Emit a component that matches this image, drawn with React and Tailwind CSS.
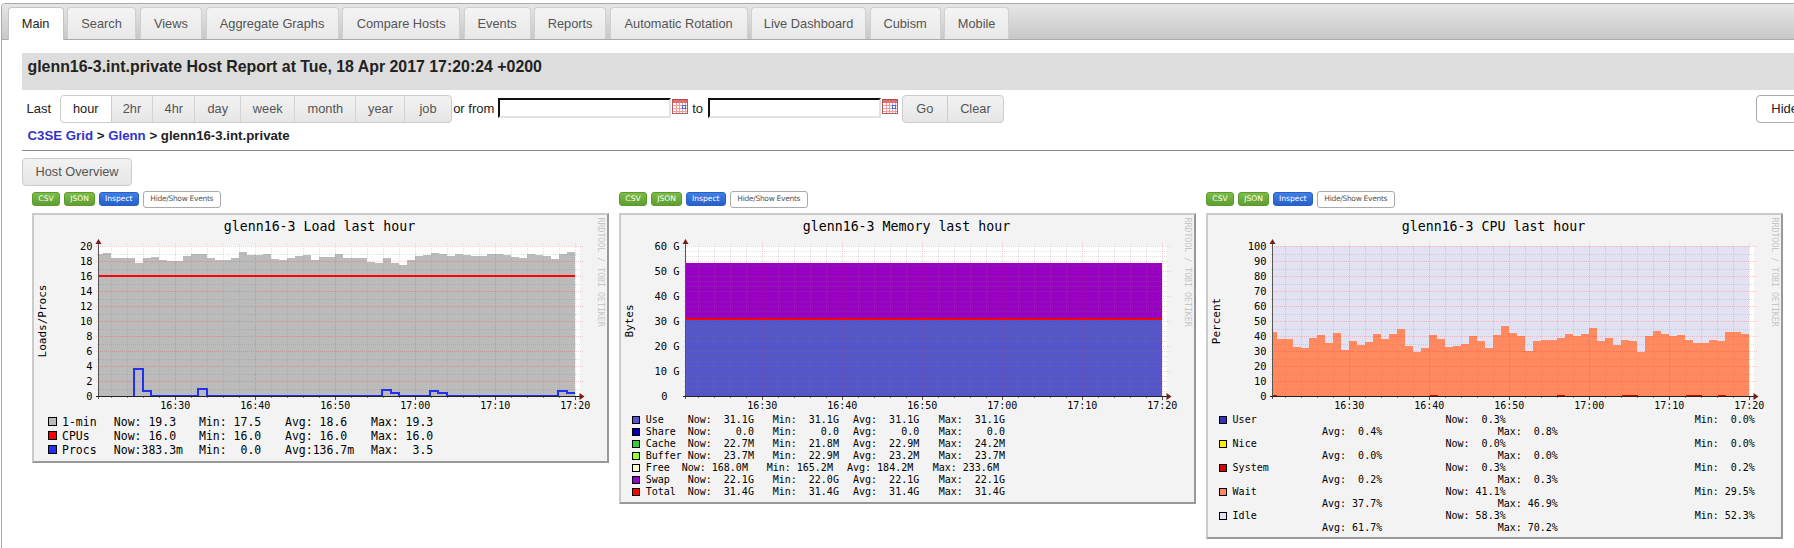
import React from "react";

const X0 = 64.5;
const BOTTOM = 181;
const TOP = 31;
const W = 476.5;

const TABS = [
  ["Main", "w-[56px]"],
  ["Search", "w-[69px]"],
  ["Views", "w-[62.5px]"],
  ["Aggregate Graphs", "w-[133px]"],
  ["Compare Hosts", "w-[118px]"],
  ["Events", "w-[67px]"],
  ["Reports", "w-[72px]"],
  ["Automatic Rotation", "w-[138px]"],
  ["Live Dashboard", "w-[115px]"],
  ["Cubism", "w-[71px]"],
  ["Mobile", "w-[65px]"],
];
const RANGES = [
  ["hour", "w-[50.6px]"],
  ["2hr", "w-[41.7px]"],
  ["4hr", "w-[42.1px]"],
  ["day", "w-[45.9px]"],
  ["week", "w-[54px]"],
  ["month", "w-[61.2px]"],
  ["year", "w-[49px]"],
  ["job", "w-[45.2px]"],
];

const LOAD = [19, 19.1, 18.4, 18.4, 18.4, 17.8, 18.4, 18.5, 18.1, 18, 18, 18.7, 18.9, 18.9, 18.4, 18.1, 18.1, 18.4, 19.2, 18.8, 18.8, 19, 18.3, 18.1, 18.4, 18.7, 18.8, 18.1, 18.5, 18.5, 19, 18.4, 18.4, 18.4, 17.9, 17.7, 18.4, 17.8, 17.5, 18.1, 18.7, 18.8, 19.1, 19, 18.7, 19, 18.8, 18.7, 18.7, 19, 19, 18.8, 18.5, 18.4, 19, 18.8, 18.7, 18.3, 19, 19.2];
const WAIT = [43, 38, 38, 33, 32, 39, 41, 35.5, 42, 31, 37, 34, 36, 41.5, 38, 41.5, 44.7, 33.5, 29.5, 32, 41, 38, 33, 33.5, 34.8, 40, 37, 32, 41, 46.9, 42, 39.8, 30, 37, 37.3, 37.3, 39, 41.5, 39.8, 41.5, 45.5, 37, 39, 34, 37.5, 37, 29.5, 39.8, 43.5, 41.5, 39.8, 41, 37.5, 35.5, 35.5, 37.5, 37, 43, 42.4, 41.5];
const PROCS = [[35.7, 0], [35.7, 3.5], [44.2, 3.5], [44.2, 0.6], [52.7, 0.6], [52.7, 0], [99.7, 0], [99.7, 0.85], [108.7, 0.85], [108.7, 0], [283.7, 0], [283.7, 0.7], [292.2, 0.7], [292.2, 0.3], [300.6, 0.3], [300.6, 0], [331.7, 0], [331.7, 0.6], [339.7, 0.6], [339.7, 0.3], [348.4, 0.3], [348.4, 0], [459.7, 0], [459.7, 0.6], [468.2, 0.6], [468.2, 0.3], [476.5, 0.3]];

function stepPath(values, pxPerUnit) {
  let d = `M${X0} ${BOTTOM}`;
  let x = X0;
  values.forEach((v, i) => {
    const y = BOTTOM - v * pxPerUnit;
    d += `L${x} ${y}`;
    x += i === 0 ? 4.3 : 8;
    d += `L${Math.min(x, X0 + W)} ${y}`;
  });
  return d + `L${X0 + W} ${BOTTOM}Z`;
}

function Chart({ title, ylabel, labels, minor, major, children, over }) {
  const vMajor = [76.7, 156.7, 236.7, 316.7, 396.7, 476.7];
  const vAll = [];
  for (let x = 12.7; x <= 477; x += 16) vAll.push(x);
  const vMinor = vAll.filter((x) => !vMajor.some((m) => Math.abs(m - x) < 0.1));
  const hMajor = [];
  for (let y = TOP; y <= BOTTOM + 0.01; y += major) hMajor.push(y);
  const hMinor = [];
  for (let y = TOP; y <= BOTTOM + 0.01; y += minor) {
    if (!hMajor.some((m) => Math.abs(m - y) < 0.1)) hMinor.push(y);
  }
  const times = ["16:30", "16:40", "16:50", "17:00", "17:10", "17:20"];
  const mono = "'DejaVu Sans Mono', monospace";
  return (
    <svg width="573" height="199" className="block" fontFamily={mono}>
      <text x="285.5" y="16" textAnchor="middle" fontSize="13.25" fill="#000">{title}</text>
      <text transform={`translate(${11.5} 106) rotate(-90)`} textAnchor="middle" fontSize="11" fill="#000">{ylabel}</text>
      <text transform="translate(563.5 2.5) rotate(90)" fontSize="8.25" fill="#c6c6c6">RRDTOOL / TOBI OETIKER</text>
      <rect x={X0} y={TOP} width="481" height={BOTTOM - TOP} fill="#fff" shapeRendering="crispEdges" />
      <g shapeRendering="crispEdges">{children}</g>
      <g shapeRendering="crispEdges" strokeWidth="1" strokeDasharray="1 1">
        {hMinor.map((y) => (
          <line key={y} x1={X0 - 2} x2={X0 + 482} y1={y + 0.5} y2={y + 0.5} stroke="#808080" strokeOpacity="0.24" />
        ))}
        {vMinor.map((x) => (
          <line key={x} x1={X0 + x} x2={X0 + x} y1={TOP - 2} y2={BOTTOM} stroke="#808080" strokeOpacity="0.24" />
        ))}
        {hMajor.map((y) => (
          <line key={y} x1={X0 - 3} x2={X0 + 484} y1={y + 0.5} y2={y + 0.5} stroke="#ff0000" strokeOpacity="0.19" />
        ))}
        {vMajor.map((x) => (
          <line key={x} x1={X0 + x} x2={X0 + x} y1={TOP - 3} y2={BOTTOM} stroke="#ff0000" strokeOpacity="0.19" />
        ))}
      </g>
      <g shapeRendering="crispEdges">{over}</g>
      <g shapeRendering="crispEdges">
        <line x1={X0} x2={X0} y1={TOP - 3} y2={BOTTOM + 3} stroke="#555" />
        <line x1={X0 - 3} x2={X0 + 482} y1={BOTTOM + 0.5} y2={BOTTOM + 0.5} stroke="#222" />
        {vMinor.map((x) => (
          <line key={x} x1={X0 + x} x2={X0 + x} y1={BOTTOM + 1} y2={BOTTOM + 2} stroke="#888" />
        ))}
        {vMajor.map((x) => (
          <line key={x} x1={X0 + x} x2={X0 + x} y1={BOTTOM + 1} y2={BOTTOM + 4} stroke="#555" />
        ))}
      </g>
      <polygon points={`${X0 - 3},${TOP - 2} ${X0 + 3},${TOP - 2} ${X0},${TOP - 7}`} fill="#7a1c1c" />
      <polygon points={`${X0 + 481},${BOTTOM - 3} ${X0 + 481},${BOTTOM + 4} ${X0 + 486},${BOTTOM + 0.5}`} fill="#7a1c1c" />
      {labels.map(([t, y, end]) => (
        <text key={t} x={end ?? X0 - 6} y={y + 3.7} textAnchor="end" fontSize="10.4" fill="#000">{t}</text>
      ))}
      {times.map((t, i) => (
        <text key={t} x={X0 + vMajor[i]} y="194" textAnchor="middle" fontSize="10" fill="#000">{t}</text>
      ))}
    </svg>
  );
}

function Swatch({ c, big }) {
  return <span className={big ? "block h-[9px] w-[9px] border border-black" : "block h-[8px] w-[8px] border border-black"} style={{ background: c }} />;
}

function Card({ children }) {
  return (
    <div className="w-[577px] shrink-0">
      <div className="flex h-[17px] items-center [font-family:'DejaVu_Sans',sans-serif]">
        <span className="flex h-[14px] w-[28px] items-center justify-center rounded-[3px] border border-[#5c9a2c] bg-linear-to-b from-[#7cbd48] to-[#5f9e30] text-[7.6px] text-white">CSV</span>
        <span className="ml-[4px] flex h-[14px] w-[31px] items-center justify-center rounded-[3px] border border-[#5c9a2c] bg-linear-to-b from-[#7cbd48] to-[#5f9e30] text-[7.6px] text-white">JSON</span>
        <span className="ml-[4px] flex h-[14px] w-[39.5px] items-center justify-center rounded-[3px] border border-[#2a5fc4] bg-linear-to-b from-[#3f7fe6] to-[#2660cc] text-[7.6px] text-white">Inspect</span>
        <span className="ml-[4.5px] flex h-[17px] w-[77.5px] items-center justify-center rounded-[3px] border border-[#aaa] bg-white text-[7.5px] tracking-[-0.3px] text-[#555]">Hide/Show Events</span>
      </div>
      <div className="mt-[5px] border-2 border-t-[#cbcbcb] border-l-[#cbcbcb] border-r-[#999] border-b-[#999] bg-[#f3f3f3] [font-family:'DejaVu_Sans_Mono',monospace]">
        {children}
      </div>
    </div>
  );
}

const LOAD_ROWS = [
  ["#bbbbbb", "1-min", "Now: 19.3", "Min: 17.5", "Avg: 18.6", "Max: 19.3"],
  ["#ff0000", "CPUs", "Now: 16.0", "Min: 16.0", "Avg: 16.0", "Max: 16.0"],
  ["#2030f4", "Procs", "Now:383.3m", "Min:  0.0", "Avg:136.7m", "Max:  3.5"],
];

const MEM_ROWS = [
  ["#5555cc", "Use", "Now:  31.1G", "Min:  31.1G", "Avg:  31.1G", "Max:  31.1G", 42],
  ["#0000aa", "Share", "Now:    0.0", "Min:    0.0", "Avg:    0.0", "Max:    0.0", 42],
  ["#33cc33", "Cache", "Now:  22.7M", "Min:  21.8M", "Avg:  22.9M", "Max:  24.2M", 42],
  ["#99ff33", "Buffer", "Now:  23.7M", "Min:  22.9M", "Avg:  23.2M", "Max:  23.7M", 42],
  ["#f0ffc0", "Free", "Now: 168.0M", "Min: 165.2M", "Avg: 184.2M", "Max: 233.6M", 36],
  ["#9900cc", "Swap", "Now:  22.1G", "Min:  22.0G", "Avg:  22.1G", "Max:  22.1G", 42],
  ["#ff0000", "Total", "Now:  31.4G", "Min:  31.4G", "Avg:  31.4G", "Max:  31.4G", 42],
];

const CPU_ROWS = [
  ["#3333bb", "User", "Now:  0.3%", "Min:  0.0%", "Avg:  0.4%", "Max:  0.8%"],
  ["#ffea00", "Nice", "Now:  0.0%", "Min:  0.0%", "Avg:  0.0%", "Max:  0.0%"],
  ["#dd0000", "System", "Now:  0.3%", "Min:  0.2%", "Avg:  0.2%", "Max:  0.3%"],
  ["#ff8a60", "Wait", "Now: 41.1%", "Min: 29.5%", "Avg: 37.7%", "Max: 46.9%"],
  ["#e2e2f2", "Idle", "Now: 58.3%", "Min: 52.3%", "Avg: 61.7%", "Max: 70.2%"],
];

function LoadGraph() {
  const labels = [];
  for (let v = 20; v >= 0; v -= 2) labels.push([String(v), BOTTOM - v * 7.5]);
  const blue = PROCS.map(([x, v]) => `${X0 + x},${BOTTOM - v * 7.5 - 0.5}`).join(" ");
  return (
    <Card>
      <Chart
        title="glenn16-3 Load last hour"
        ylabel="Loads/Procs"
        labels={labels}
        minor={7.5}
        major={15}
        over={
          <>
            <rect x={X0} y="60" width={W} height="2" fill="#ff0000" />
            <polyline points={blue} fill="none" stroke="#2030f4" strokeWidth="2" />
          </>
        }
      >
        <path d={stepPath(LOAD, 7.5)} fill="#bbbbbb" />
      </Chart>
      <div className="pt-px pb-[4px] pl-[13.5px] text-[11.5px] leading-[14px] whitespace-pre text-black">
        {LOAD_ROWS.map((r) => (
          <div key={r[1]} className="grid grid-cols-[14.5px_51.8px_85.2px_86px_86px_1fr] items-center">
            <Swatch c={r[0]} big />
            <span>{r[1]}</span>
            <span>{r[2]}</span>
            <span>{r[3]}</span>
            <span>{r[4]}</span>
            <span>{r[5]}</span>
          </div>
        ))}
      </div>
    </Card>
  );
}

function MemGraph() {
  const labels = [60, 50, 40, 30, 20, 10].map((v) => [`${v} G`, BOTTOM - v * 2.5]);
  labels.push(["0", BOTTOM, X0 - 18]);
  return (
    <Card>
      <Chart
        title="glenn16-3 Memory last hour"
        ylabel="Bytes"
        labels={labels}
        minor={5}
        major={25}
        over={<rect x={X0} y="103" width={W} height="2" fill="#ff0000" />}
      >
        <rect x={X0} y="48" width={W} height="56" fill="#9900c4" />
        <rect x={X0} y="104" width={W} height="77" fill="#5555cc" />
      </Chart>
      <div className="pb-[4px] pl-[11px] text-[10px] leading-[12px] whitespace-pre text-black">
        {MEM_ROWS.map((r) => (
          <div key={r[1]} className="flex h-[12px] items-center">
            <span className="w-[13.7px] shrink-0"><Swatch c={r[0]} /></span>
            <span className="shrink-0" style={{ width: r[6] }}>{r[1]}</span>
            <span className="w-[85px] shrink-0">{r[2]}</span>
            <span className="w-[80.3px] shrink-0">{r[3]}</span>
            <span className="w-[85.7px] shrink-0">{r[4]}</span>
            <span>{r[5]}</span>
          </div>
        ))}
      </div>
    </Card>
  );
}

function CpuGraph() {
  const labels = [];
  for (let v = 100; v >= 0; v -= 10) labels.push([String(v), BOTTOM - v * 1.5]);
  const sys = [[0, 4.3], [157, 8], [284.6, 8], [349, 16], [413, 16], [445, 8]];
  return (
    <Card>
      <Chart
        title="glenn16-3 CPU last hour"
        ylabel="Percent"
        labels={labels}
        minor={7.5}
        major={15}
        over={sys.map(([x, w]) => (
          <rect key={x} x={X0 + x} y={BOTTOM - 1} width={w} height="1" fill="#dd0000" />
        ))}
      >
        <rect x={X0} y={TOP} width={W} height={BOTTOM - TOP} fill="#e2e2f2" />
        <path d={stepPath(WAIT, 1.5)} fill="#ff8a60" />
      </Chart>
      <div className="pb-[3px] pl-[11px] text-[10px] leading-[12px] whitespace-pre text-black">
        {CPU_ROWS.map((r) => (
          <div key={r[1]}>
            <div className="grid h-[12px] grid-cols-[13.6px_212.9px_249.2px_1fr] items-center">
              <Swatch c={r[0]} />
              <span>{r[1]}</span>
              <span>{r[2]}</span>
              <span>{r[3]}</span>
            </div>
            <div className="grid h-[12px] grid-cols-[175.7px_1fr] items-center pl-[103px]">
              <span>{r[4]}</span>
              <span>{r[5]}</span>
            </div>
          </div>
        ))}
      </div>
    </Card>
  );
}

function CalendarIcon() {
  return (
    <svg width="16" height="15" viewBox="0 0 16 15" className="shrink-0" shapeRendering="crispEdges">
      <rect x="0.5" y="0.5" width="15" height="14" fill="#fff" stroke="#b85a5a" />
      <rect x="1" y="1" width="14" height="3" fill="#e07070" />
      <path d="M1 0.5V0M3.5 0V1M6 0V1M8.5 0V1M11 0V1M13.5 0V1" stroke="#a04040" />
      <path d="M4.5 4V14M7.5 4V14M10.5 4V14M13.5 4V14M1 6.5H15M1 9.5H15M1 12.5H15" stroke="#eca0a0" />
      <rect x="10" y="6" width="4" height="4" fill="#3c6ee8" />
      <rect x="11" y="7" width="2" height="2" fill="#fff" />
    </svg>
  );
}

function DateInput() {
  return (
    <span className="block h-[20px] w-[173.5px] shrink-0 -translate-y-[1px] border-2 border-t-[#111] border-l-[#111] border-r-[#e2e2e2] border-b-[#e2e2e2] bg-white" />
  );
}

export default function App() {
  return (
    <div className="h-[548px] w-full overflow-hidden bg-white pt-[3px] text-[12.8px] text-[#222] [font-family:'Liberation_Sans',Arial,sans-serif]">
      <div className="ml-px h-[700px] w-[1900px] rounded-[4px] border border-[#aaa] bg-white">
        <div className="flex h-[36px] gap-[3.5px] rounded-t-[3px] border-b border-[#aaa] bg-linear-to-b from-[#e6e6e6] to-[#c8c8c8] pt-[3px] pl-[5.6px]">
          {TABS.map(([t, w], i) =>
            i === 0 ? (
              <div key={t} className={`${w} -mb-px flex h-[33px] items-center justify-center rounded-t-[4px] border border-b-0 border-[#c4c4c4] bg-white text-[#222]`}>
                {t}
              </div>
            ) : (
              <div key={t} className={`${w} flex h-[32px] items-center justify-center rounded-t-[4px] border border-b-0 border-[#d0d0d0] bg-linear-to-b from-[#f4f4f4] to-[#e8e8e8] text-[#555]`}>
                {t}
              </div>
            )
          )}
        </div>
        <div className="pt-[13px] pl-[20px]">
          <h2 className="h-[37px] bg-[#dddddd] pt-[5px] pl-[5.5px] text-[15.9px] leading-[18px] font-bold text-[#222]">
            glenn16-3.int.private Host Report at Tue, 18 Apr 2017 17:20:24 +0200
          </h2>
          <div className="mt-[5px] flex h-[28px] items-center pl-[4.5px] text-[13px]">
            <span className="w-[33.5px] shrink-0">Last</span>
            <div className="flex h-[28px] shrink-0 rounded-[4px] border border-[#ccc] bg-linear-to-b from-[#f2f2f2] to-[#e6e6e6] text-[12.8px] text-[#555]">
              {RANGES.map(([r, w], i) => (
                <span
                  key={r}
                  className={
                    i === 0
                      ? `${w} flex items-center justify-center rounded-l-[4px] border-r border-[#ccc] bg-white text-[#222]`
                      : i === RANGES.length - 1
                      ? `${w} flex items-center justify-center`
                      : `${w} flex items-center justify-center border-r border-[#d4d4d4]`
                  }
                >
                  {r}
                </span>
              ))}
            </div>
            <span className="ml-[1.5px] w-[44.5px] shrink-0">or from</span>
            <DateInput />
            <span className="ml-px -translate-y-[3px]"><CalendarIcon /></span>
            <span className="ml-[4px] w-[15.5px] shrink-0">to</span>
            <DateInput />
            <span className="ml-px -translate-y-[3px]"><CalendarIcon /></span>
            <div className="ml-[4px] flex h-[28px] shrink-0 rounded-[4px] border border-[#ccc] bg-linear-to-b from-[#f2f2f2] to-[#e6e6e6] text-[12.8px] text-[#555]">
              <span className="flex w-[44.4px] items-center justify-center border-r border-[#ccc]">Go</span>
              <span className="flex w-[55.8px] items-center justify-center">Clear</span>
            </div>
            <span className="ml-[752px] flex h-[28px] w-[70px] shrink-0 items-center rounded-[4px] border border-[#aaa] bg-white pl-[14px]">
              Hide
            </span>
          </div>
          <div className="mt-[5px] h-[15px] pl-[5.5px] text-[13.25px] leading-[15px] font-bold">
            <span className="text-[#3333cc]">C3SE Grid</span> &gt; <span className="text-[#3333cc]">Glenn</span> &gt; glenn16-3.int.private
          </div>
          <hr className="mt-[7px] border-t border-[#888]" />
          <div className="mt-[6.5px] flex h-[28px] w-[110px] items-center justify-center rounded-[4px] border border-[#ccc] bg-linear-to-b from-[#f2f2f2] to-[#e6e6e6] text-[#555]">
            Host Overview
          </div>
          <div className="mt-[5px] flex items-start gap-[10px] pl-[10px]">
            <LoadGraph />
            <MemGraph />
            <CpuGraph />
          </div>
        </div>
      </div>
    </div>
  );
}
